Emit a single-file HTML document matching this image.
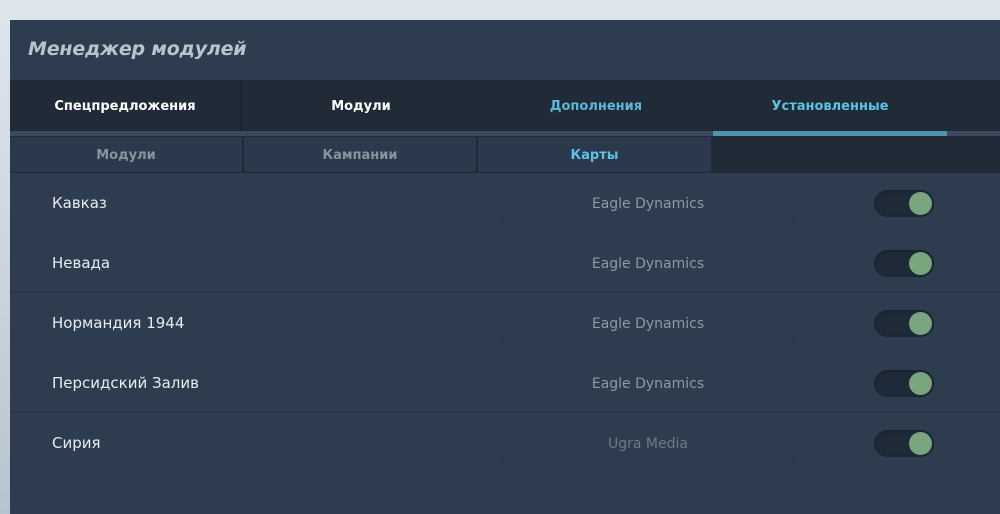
<!DOCTYPE html>
<html><head><meta charset="utf-8"><style>
*{margin:0;padding:0;box-sizing:border-box}
body{width:1000px;height:514px;overflow:hidden;background:linear-gradient(180deg,#dfe5ec,#c8d2dc 60%,#b7c3cf);font-family:"DejaVu Sans","Liberation Sans",sans-serif;position:relative}
.p{position:absolute;left:10px;top:20px;right:0;bottom:0;background:#2d3c4f}
.a{position:absolute}
.title{left:28px;top:38px;font-size:19px;font-weight:bold;font-style:italic;color:#b4c6cc;letter-spacing:-0.2px}
.tabs{left:10px;top:80px;width:990px;height:51px;background:#212b38}
.t{position:absolute;top:0;height:51px;line-height:54px;text-align:center;font-size:13px;font-weight:bold;color:#fff}
.sep{left:10px;top:131px;width:990px;height:5px;background:#3a4a5c}
.st{position:absolute;top:137px;height:35px;line-height:37px;text-align:center;font-size:13px;font-weight:bold;color:#8a939c;background:#2a394b}
.row{position:absolute;left:10px;width:990px;height:60px}
.name{position:absolute;left:42px;top:0;line-height:60px;font-size:15px;color:#e8ecef}
.dev{position:absolute;left:491px;width:294px;top:12px;height:36px;border-left:1px solid #27354a;border-right:1px solid #27354a;line-height:38px;text-align:center;font-size:14px;color:#8e99a4}
.tg{position:absolute;left:864px;top:17px;width:60px;height:27px;border-radius:14px;background:#1f2a38;box-shadow:inset 0 1px 3px #15202b}
.tg:after{content:"";position:absolute;right:2px;top:2px;width:23px;height:23px;border-radius:50%;background:#79a57f}
.line{position:absolute;left:10px;width:990px;height:1px;background:#25323f}
</style></head><body>
<div class="p"></div>
<div class="a title">Менеджер модулей</div>
<div class="a tabs">
<div class="t" style="left:0;width:232px;border-right:2px solid #1a2330">Спецпредложения</div>
<div class="t" style="left:234px;width:234px">Модули</div>
<div class="t" style="left:469px;width:234px;color:#5bb8d6">Дополнения</div>
<div class="t" style="left:703px;width:234px;color:#5bc4e4">Установленные</div>
</div>
<div class="a sep"></div>
<div class="a" style="left:713px;top:131px;width:234px;height:5px;background:#4e94b0"></div>
<div class="a" style="left:10px;top:136px;width:990px;height:37px;background:#212b38"></div>
<div class="st" style="left:10px;width:232px">Модули</div>
<div class="st" style="left:244px;width:232px">Кампании</div>
<div class="st" style="left:478px;width:233px;color:#5bc4e4">Карты</div>
<div class="row" style="top:173px"><div class="name">Кавказ</div><div class="dev">Eagle Dynamics</div><div class="tg"></div></div>
<div class="row" style="top:233px"><div class="name">Невада</div><div class="dev">Eagle Dynamics</div><div class="tg"></div></div>
<div class="line" style="top:292px"></div>
<div class="row" style="top:293px"><div class="name">Нормандия 1944</div><div class="dev">Eagle Dynamics</div><div class="tg"></div></div>
<div class="row" style="top:353px"><div class="name">Персидский Залив</div><div class="dev">Eagle Dynamics</div><div class="tg"></div></div>
<div class="line" style="top:412px"></div>
<div class="row" style="top:413px"><div class="name">Сирия</div><div class="dev" style="color:#6f7a86">Ugra Media</div><div class="tg"></div></div>
</body></html>
